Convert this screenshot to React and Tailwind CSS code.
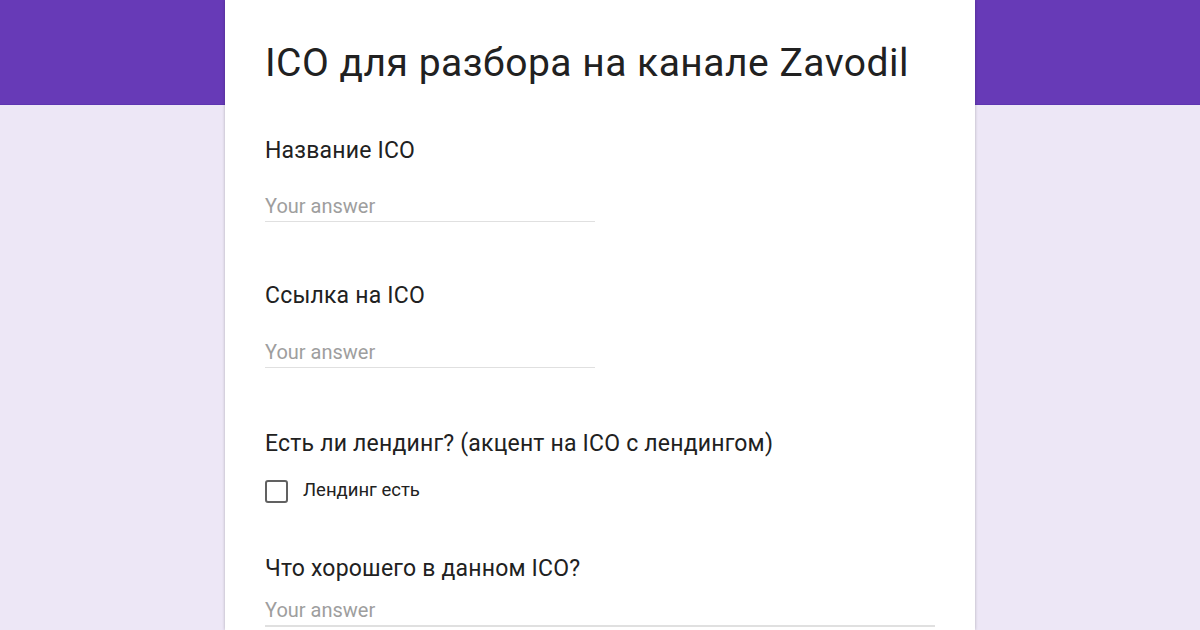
export default function App() {
  const font = { fontFamily: 'Roboto, "Noto Sans", sans-serif' };

  return (
    <div
      className="min-h-[630px] w-full bg-[linear-gradient(to_bottom,#673ab7_0px,#673ab7_104px,#5e35b1_104px,#5e35b1_105px,#ede7f6_105px)] overflow-hidden"
      style={font}
    >
      <div className="mx-auto w-[750px] min-h-[630px] bg-white shadow-[0_0_3px_rgba(0,0,0,0.25)] pl-10 pr-10 pt-10">
        <h1 className="text-[39px] leading-[46px] text-[#212121] font-normal tracking-[0.5px]">
          ICO для разбора на канале Zavodil
        </h1>

        {/* Название ICO */}
        <div className="mt-[51px] text-[23px] leading-[28px] text-[#212121] tracking-[0.2px]">Название ICO</div>
        <div className="mt-[29px] w-[330px] border-b border-[#e0e0e0] pb-[3px] text-[20px] leading-[24px] text-[#9e9e9e]">
          Your answer
        </div>

        {/* Ссылка на ICO */}
        <div className="mt-[60px] text-[23px] leading-[28px] text-[#212121] tracking-[0.2px]">Ссылка на ICO</div>
        <div className="mt-[30px] w-[330px] border-b border-[#e0e0e0] pb-[3px] text-[20px] leading-[24px] text-[#9e9e9e]">
          Your answer
        </div>

        {/* Лендинг */}
        <div className="mt-[62px] text-[23px] leading-[28px] text-[#212121] tracking-[0.2px]">
          Есть ли лендинг? (акцент на ICO с лендингом)
        </div>
        <div className="mt-[21px] flex items-center h-6">
          <div className="w-[23px] h-[23px] rounded-[3px] border-2 border-[#616161]" />
          <span className="ml-[15px] text-[18.5px] text-[#212121]">Лендинг есть</span>
        </div>

        {/* Что хорошего */}
        <div className="mt-[52px] text-[23px] leading-[28px] text-[#212121] tracking-[0.2px]">Что хорошего в данном ICO?</div>
        <div className="mt-[15px] w-[670px] border-b-2 border-[#e0e0e0] pb-[3px] text-[20px] leading-[24px] text-[#9e9e9e]">
          Your answer
        </div>
      </div>
    </div>
  );
}
